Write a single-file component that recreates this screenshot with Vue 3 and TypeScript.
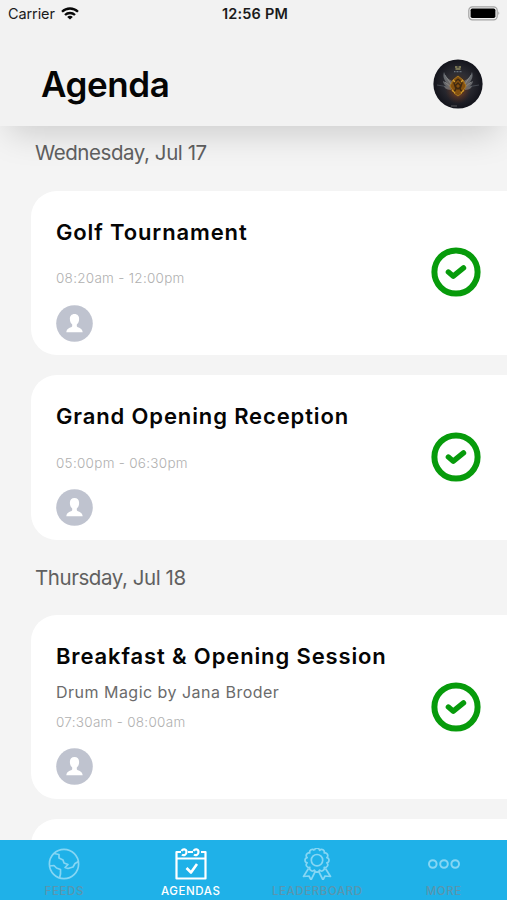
<script setup lang="ts">
interface Session {
  title: string
  subtitle?: string
  time: string
}
interface Day {
  label: string
  sessions: Session[]
}
interface Tab {
  id: 'feeds' | 'agendas' | 'leaderboard' | 'more'
  label: string
}

const days: Day[] = [
  {
    label: 'Wednesday, Jul 17',
    sessions: [
      { title: 'Golf Tournament', time: '08:20am - 12:00pm' },
      { title: 'Grand Opening Reception', time: '05:00pm - 06:30pm' },
    ],
  },
  {
    label: 'Thursday, Jul 18',
    sessions: [
      {
        title: 'Breakfast & Opening Session',
        subtitle: 'Drum Magic by Jana Broder',
        time: '07:30am - 08:00am',
      },
    ],
  },
]

const tabs: Tab[] = [
  { id: 'feeds', label: 'FEEDS' },
  { id: 'agendas', label: 'AGENDAS' },
  { id: 'leaderboard', label: 'LEADERBOARD' },
  { id: 'more', label: 'MORE' },
]
const activeTab: Tab['id'] = 'agendas'

// Scalloped outline of the award rosette.
const scallops = 12
const rosette: string = Array.from({ length: scallops + 1 }, (_, i) => {
  const a = (i / scallops) * Math.PI * 2 - Math.PI / 2 - Math.PI / scallops
  const p = `${(16 + 10.2 * Math.cos(a)).toFixed(2)} ${(12.2 + 10.2 * Math.sin(a)).toFixed(2)}`
  return i === 0 ? `M${p}` : `A2.7 2.7 0 0 1 ${p}`
}).join('')
</script>

<template>
  <div class="screen">
    <header class="header">
      <div class="status">
        <div class="carrier">
          <span>Carrier</span>
          <svg class="wifi" viewBox="0 0 18 13" fill="none" stroke="#080808" stroke-width="2.3">
            <path d="M1 4.8C5.5.4 12.5.4 17 4.8" />
            <path d="M4 8C6.8 5.3 11.2 5.3 14 8" />
            <path d="M9 12.6 6.2 9.900C7.8 8.5 10.2 8.5 11.8 9.900Z" fill="#080808" stroke="none" />
          </svg>
        </div>
        <span class="clock">12:56 PM</span>
        <div class="battery-wrap">
          <svg class="battery" viewBox="0 0 33 15">
            <rect x=".8" y=".8" width="28.4" height="13" rx="3.6" fill="none" stroke="#a3a3a3" stroke-width="1.2" />
            <rect x="2.6" y="2.6" width="24.8" height="9.4" rx="1.7" fill="#000" />
            <path d="M30.5 5.3Q32.3 7.3 30.5 9.3Z" fill="#888" />
          </svg>
        </div>
      </div>
      <div class="title-row">
        <h1>Agenda</h1>
        <svg class="profile" viewBox="0 0 50 50">
          <defs>
            <radialGradient id="sky" cx=".5" cy=".5" r=".52">
              <stop offset="0" stop-color="#4a3422" />
              <stop offset=".45" stop-color="#2d2d34" />
              <stop offset="1" stop-color="#11121a" />
            </radialGradient>
            <radialGradient id="glow">
              <stop offset="0" stop-color="#c05a14" stop-opacity=".75" />
              <stop offset="1" stop-color="#5f220d" stop-opacity="0" />
            </radialGradient>
            <linearGradient id="wing" x1="0" y1="0" x2="1" y2="1">
              <stop offset="0" stop-color="#777f88" stop-opacity=".75" />
              <stop offset="1" stop-color="#aaa49b" stop-opacity=".45" />
            </linearGradient>
          </defs>
          <circle cx="25" cy="25" r="24.6" fill="url(#sky)" />
          <ellipse cx="25" cy="31" rx="13" ry="14" fill="url(#glow)" />
          <g id="left-wing">
            <path d="M11 13C13 19 15 20 19 22L18 31C13 31 11 28 11 27L15 28C10 26 10 22 10 22L14 24C10 20 10 16 11 13Z" fill="url(#wing)" />
            <path d="M12 16 18 25M12 23 18 28" stroke="#bfc0bf" stroke-opacity=".6" stroke-width=".6" />
          </g>
          <use href="#left-wing" transform="translate(50 0) scale(-1 1)" />
          <path d="M4 26 16 28M46 26 34 28" stroke="#697078" stroke-width=".5" />
          <path d="m25 17 5 4 3 6-4 7-4 3-4-3-4-7 3-6Z" fill="#84500f" stroke="#a87820" />
          <path d="m25 20 4 4-2 6 3 4m-5-14-4 4 2 6-3 4m5-10-3 3 3 3 3-3Z" fill="none" stroke="#3e2810" stroke-width="1.4" />
          <path d="m20 21 2 2m8-2-2 2m-9 8 3 3m9-3-3 3" stroke="#d29a2b" stroke-width="1.3" />
          <path d="M22 8h2.5m1 0H28M22.5 10h5" stroke="#928d60" stroke-width="1.3" />
          <path d="M21 12.6h8" stroke="#68717a" stroke-width="1.3" stroke-dasharray="1 .5" />
          <path d="M18 47h6" stroke="#777" stroke-width=".7" />
        </svg>
      </div>
    </header>

    <main class="list">
      <section v-for="day in days" :key="day.label" class="day">
        <h2>{{ day.label }}</h2>
        <article v-for="s in day.sessions" :key="s.title" class="card" :class="{ tall: s.subtitle }">
          <div class="info">
            <h3>{{ s.title }}</h3>
            <p v-if="s.subtitle" class="subtitle">{{ s.subtitle }}</p>
            <p class="time">{{ s.time }}</p>
            <svg class="person" viewBox="0 0 37 37">
              <circle cx="18.5" cy="18.5" r="18.3" fill="#bfc3cf" />
              <path d="M18.5 9c-3 0-4.800 2.200-4.600 5.200.1 2.400 1 4.200 2.300 5.300v1.700c-.4 1.500-5.600 1.300-5.900 6h16.400c-.3-4.700-5.500-4.500-5.900-6v-1.700c1.300-1.100 2.200-2.900 2.300-5.300.2-3-1.600-5.200-4.600-5.200Z" fill="#fff" />
            </svg>
          </div>
          <svg class="check" viewBox="0 0 50 50" fill="none" stroke="#079b0b">
            <circle cx="25" cy="25" r="21.6" stroke-width="6" />
            <path d="m17.4 25 4.900 4.200 10.200-8.300" stroke-width="5.4" stroke-linecap="round" stroke-linejoin="round" />
          </svg>
        </article>
      </section>
      <article class="card"></article>
    </main>

    <nav class="tabs">
      <div v-for="tab in tabs" :key="tab.id" class="tab" :class="{ active: tab.id === activeTab }">
        <svg viewBox="0 0 32 32" fill="none" stroke="currentColor" stroke-width="1.7" stroke-linejoin="round">
          <template v-if="tab.id === 'feeds'">
            <circle cx="16" cy="16" r="14.6" />
            <path d="M6 5.500 11 6.500 11 10 15 12 16 15 20 16.500 17 19.500 20 20.500 25 19 27 15.500 30.500 13.500" />
            <path d="M1.500 18 6 17.500 8.500 20 12.500 21.500 12.500 26 11.500 30" />
          </template>
          <template v-else-if="tab.id === 'agendas'">
            <g stroke-width="2.2">
              <path d="M6 4H1.500v26.500h29V4H26M13 4h5M1.500 10.500h29" />
              <path d="M7 6.500c1.500 1.500 4.500.5 4.500-2.500S8 .5 6.500 3M19 6.500c1.500 1.500 4.500.5 4.500-2.500s-3.500-3.500-5-1" />
              <path d="m11.500 20 4.500 4.500 6-8.500" stroke-width="2.600" />
            </g>
          </template>
          <template v-else-if="tab.id === 'leaderboard'">
            <path :d="rosette" />
            <circle cx="16" cy="12.2" r="5.700" />
            <path d="m7.500 20.500-5 8 5.500-.5 2 4 4.500-9M24.500 20.500l5 8-5.500-.5-2 4-4.500-9" />
          </template>
          <template v-else>
            <g stroke-width="2">
              <circle cx="4.800" cy="16" r="3.800" />
              <circle cx="16" cy="16" r="3.800" />
              <circle cx="27.200" cy="16" r="3.800" />
            </g>
          </template>
        </svg>
        <span>{{ tab.label }}</span>
      </div>
    </nav>
  </div>
</template>

<style>
body {
  margin: 0;
  overflow: hidden;
}
</style>

<style scoped>
.screen {
  display: flex;
  flex-direction: column;
  width: 507px;
  height: 900px;
  overflow: hidden;
  background: #f4f4f4;
  font-family: Inter, "Liberation Sans", sans-serif;
}
h1, h2, h3, p {
  margin: 0;
}
svg {
  display: block;
  flex: none;
}
.header {
  position: relative;
  z-index: 1;
  flex: none;
  height: 126px;
  background: #f2f2f2;
  box-shadow: 0 16px 32px -9px rgba(0, 0, 0, 0.17);
}
.status {
  display: grid;
  grid-template-columns: 1fr auto 1fr;
  align-items: center;
  height: 27px;
  padding: 0 6px 0 8px;
  color: #1b1b1b;
  font-size: 14.5px;
}
.carrier {
  display: flex;
  align-items: center;
  gap: 6px;
  letter-spacing: -0.1px;
}
.wifi {
  width: 18px;
  height: 13px;
}
.clock {
  padding-left: 1px;
  font-weight: 600;
  letter-spacing: 0.2px;
}
.battery-wrap {
  display: flex;
  justify-content: flex-end;
}
.battery {
  width: 33px;
  height: 15px;
}
.title-row {
  display: flex;
  align-items: center;
  justify-content: space-between;
  height: 50px;
  padding: 32px 24px 0 41px;
}
h1 {
  color: #050505;
  font-size: 35px;
  font-weight: 600;
  line-height: 51px;
  letter-spacing: -0.4px;
}
.profile {
  width: 50px;
  height: 50px;
}
.list {
  flex: 1;
  min-height: 0;
  overflow: hidden;
  padding-left: 31px;
}
h2 {
  height: 64.5px;
  padding-left: 4px;
  color: #606060;
  font-size: 20.5px;
  font-weight: 400;
  line-height: 53px;
  letter-spacing: -0.43px;
}
.day + .day h2 {
  height: 55.5px;
  line-height: 36px;
}
.card {
  display: flex;
  align-items: center;
  justify-content: space-between;
  box-sizing: border-box;
  height: 164.5px;
  margin-bottom: 20px;
  padding: 0 26.5px 0 25px;
  border-radius: 26px 0 0 26px;
  background: #fff;
}
.card.tall {
  height: 184px;
}
.info {
  align-self: stretch;
  padding-top: 27px;
}
h3 {
  height: 51.5px;
  color: #050505;
  font-size: 22px;
  font-weight: 600;
  line-height: 28px;
  letter-spacing: 0.87px;
  white-space: nowrap;
}
.tall h3 {
  height: 40px;
}
.subtitle {
  height: 30.5px;
  color: #6b6b6b;
  font-size: 16px;
  line-height: 20px;
  letter-spacing: 0.48px;
}
.time {
  height: 35.5px;
  color: #b0b0b0;
  font-size: 13.5px;
  font-weight: 300;
  line-height: 18px;
  letter-spacing: 0.28px;
}
.person {
  width: 37px;
  height: 37px;
}
.check {
  width: 50px;
  height: 50px;
  margin-bottom: 1px;
}
.tabs {
  display: grid;
  grid-template-columns: repeat(4, 1fr);
  flex: none;
  height: 60px;
  padding-left: 1px;
  background: #1fb1e8;
}
.tab {
  display: flex;
  flex-direction: column;
  align-items: center;
  gap: 4.5px;
  padding-top: 7.5px;
  color: #85d6f4;
  font-size: 11.5px;
  font-weight: 500;
  line-height: 15px;
  letter-spacing: 0.6px;
}
.tab svg {
  width: 32px;
  height: 32px;
}
.tab span {
  color: #5996af;
}
.tab.active,
.tab.active span {
  color: #fff;
}
</style>
